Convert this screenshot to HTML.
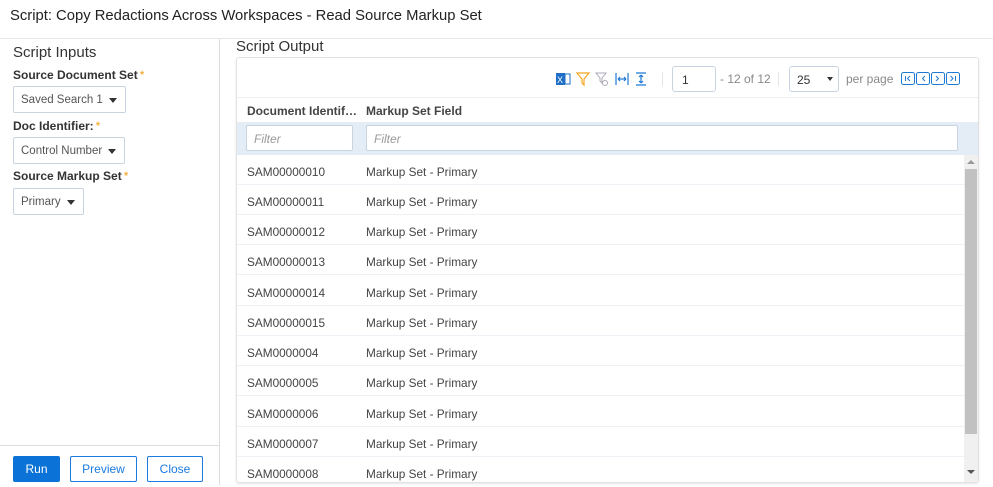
<!DOCTYPE html>
<html><head><style>
*{box-sizing:border-box;margin:0;padding:0}
body{width:993px;height:485px;overflow:hidden;background:#fff;font-family:"Liberation Sans",Arial,sans-serif;color:#333;position:relative}
.abs{position:absolute}
.title{left:10px;top:8px;font-size:14.8px;color:#222}
.hline{left:0;top:38px;width:993px;height:1px;background:#e6e6e6}
.vline{left:219px;top:39px;width:1px;height:446px;background:#ddd}
.lbl{left:13px;font-size:12px;font-weight:bold;color:#333}
.lbl span{color:#f39c12;font-weight:normal;margin-left:2px}
.sel{left:13px;height:27px;border:1px solid #c8d4e0;border-radius:2px;font-size:11.5px;color:#555;padding:7px 0 0 7px}
.caret{position:absolute;top:11px;width:0;height:0;border-left:4px solid transparent;border-right:4px solid transparent;border-top:5px solid #333}
.btn{top:456px;height:26px;border-radius:2px;font-size:12px;text-align:center;line-height:24px;border:1px solid #1b7be0;color:#1b7be0}
.panel{left:236px;top:57px;width:743px;height:426px;border:1px solid #e2e2e2;border-radius:3px;box-shadow:0 1px 2px rgba(0,0,0,.1)}
.row{left:237px;width:727px;height:30px;border-bottom:1px solid #eef1f5;font-size:11.8px;color:#444}
.row div{position:absolute;top:10px}
</style></head><body>
<div class="abs title">Script: Copy Redactions Across Workspaces - Read Source Markup Set</div>
<div class="abs hline"></div>
<div class="abs vline"></div>
<div class="abs" style="left:13px;top:44px;font-size:15px;color:#333">Script Inputs</div>
<div class="abs lbl" style="top:68px">Source Document Set<span>*</span></div>
<div class="abs sel" style="top:86px;width:113px">Saved Search 1<div class="caret" style="left:95px"></div></div>
<div class="abs lbl" style="top:119px">Doc Identifier:<span>*</span></div>
<div class="abs sel" style="top:137px;width:112px">Control Number<div class="caret" style="left:94px"></div></div>
<div class="abs lbl" style="top:169px">Source Markup Set<span>*</span></div>
<div class="abs sel" style="top:188px;width:71px">Primary<div class="caret" style="left:53px"></div></div>
<div class="abs" style="left:0;top:445px;width:219px;height:1px;background:#ddd"></div>
<div class="abs btn" style="left:13px;width:47px;background:#0b72d8;color:#fff;border-color:#0b72d8">Run</div>
<div class="abs btn" style="left:70px;width:67px">Preview</div>
<div class="abs btn" style="left:147px;width:56px">Close</div>
<div class="abs" style="left:236px;top:38px;font-size:15px;color:#333">Script Output</div>
<div class="abs panel"></div>
<svg class="abs" style="left:555px;top:71px" width="100" height="16">
<rect x="1" y="2" width="9" height="12" fill="#1f6fc8"/><text x="2" y="12" font-size="9" fill="#fff" font-family="Liberation Sans">X</text><rect x="10" y="3" width="5" height="10" fill="none" stroke="#1f6fc8"/>
<path d="M22 2h12l-5 6v6l-2-2V8z" fill="none" stroke="#f5a623" stroke-width="1.2"/>
<path d="M41 2h10l-4 5v5l-2-2V7z" fill="none" stroke="#aab" stroke-width="1"/><circle cx="50" cy="12" r="2.5" fill="none" stroke="#aab"/>
<path d="M61 2v12M73 2v12M63 8h8M63 8l2-2M63 8l2 2M71 8l-2-2M71 8l-2 2" stroke="#1f7ad6" stroke-width="1.2" fill="none"/>
<path d="M81 2h10M81 14h10M86 4v8M86 4l-2 2M86 4l2 2M86 12l-2-2M86 12l2-2" stroke="#1f7ad6" stroke-width="1.2" fill="none"/>
</svg>
<div class="abs" style="left:662px;top:72px;width:1px;height:14px;background:#e5e5e5"></div>
<div class="abs" style="left:672px;top:66px;width:44px;height:26px;border:1px solid #c8d4e0;border-radius:3px;font-size:12px;padding:6px 0 0 9px">1</div>
<div class="abs" style="left:720px;top:72px;font-size:12px;color:#888">- 12 of 12</div>
<div class="abs" style="left:778px;top:72px;width:1px;height:14px;background:#e5e5e5"></div>
<div class="abs" style="left:789px;top:66px;width:50px;height:26px;border:1px solid #c8d4e0;border-radius:3px;font-size:12px;padding:6px 0 0 7px">25<div class="caret" style="left:37px;top:10px;border-top-width:4px;border-left-width:3.5px;border-right-width:3.5px"></div></div>
<div class="abs" style="left:846px;top:72px;font-size:12px;color:#888">per page</div>
<svg class="abs" style="left:901px;top:72px" width="60" height="14">
<g fill="none" stroke="#1f7ad6" stroke-width="1"><rect x="0.5" y="0.5" width="13" height="12" rx="2"/><rect x="15.5" y="0.5" width="13" height="12" rx="2"/><rect x="30.5" y="0.5" width="13" height="12" rx="2"/><rect x="45.5" y="0.5" width="13" height="12" rx="2"/>
<path d="M4.5 4v5M9 4l-2.5 2.5L9 9M24 4l-2.5 2.5L24 9M35 4l2.5 2.5L35 9M49.5 4l2.5 2.5L49.5 9M54.5 4v5"/></g></svg>
<div class="abs" style="left:237px;top:97px;width:741px;height:1px;background:#eee"></div>
<div class="abs" style="left:247px;top:104px;font-size:12px;font-weight:bold;color:#444">Document Identif…</div>
<div class="abs" style="left:366px;top:104px;font-size:12px;font-weight:bold;color:#444">Markup Set Field</div>
<div class="abs" style="left:237px;top:122px;width:741px;height:33px;background:#e4ecf5"></div>
<div class="abs" style="left:246px;top:125px;width:107px;height:26px;background:#fff;border:1px solid #c8d4e0;border-radius:2px;font-size:12px;font-style:italic;color:#999;padding:6px 0 0 7px">Filter</div>
<div class="abs" style="left:366px;top:125px;width:592px;height:26px;background:#fff;border:1px solid #c8d4e0;border-radius:2px;font-size:12px;font-style:italic;color:#999;padding:6px 0 0 7px">Filter</div>
<div class="abs row" style="top:155px"><div style="left:10px">SAM00000010</div><div style="left:129px">Markup Set - Primary</div></div>
<div class="abs row" style="top:185px"><div style="left:10px">SAM00000011</div><div style="left:129px">Markup Set - Primary</div></div>
<div class="abs row" style="top:215px"><div style="left:10px">SAM00000012</div><div style="left:129px">Markup Set - Primary</div></div>
<div class="abs row" style="top:245px"><div style="left:10px">SAM00000013</div><div style="left:129px">Markup Set - Primary</div></div>
<div class="abs row" style="top:276px"><div style="left:10px">SAM00000014</div><div style="left:129px">Markup Set - Primary</div></div>
<div class="abs row" style="top:306px"><div style="left:10px">SAM00000015</div><div style="left:129px">Markup Set - Primary</div></div>
<div class="abs row" style="top:336px"><div style="left:10px">SAM0000004</div><div style="left:129px">Markup Set - Primary</div></div>
<div class="abs row" style="top:366px"><div style="left:10px">SAM0000005</div><div style="left:129px">Markup Set - Primary</div></div>
<div class="abs row" style="top:397px"><div style="left:10px">SAM0000006</div><div style="left:129px">Markup Set - Primary</div></div>
<div class="abs row" style="top:427px"><div style="left:10px">SAM0000007</div><div style="left:129px">Markup Set - Primary</div></div>
<div class="abs row" style="top:457px;border:none"><div style="left:10px">SAM0000008</div><div style="left:129px">Markup Set - Primary</div></div>
<div class="abs" style="left:964px;top:155px;width:14px;height:327px;background:#f0f0f0"></div>
<div class="abs" style="left:965px;top:169px;width:12px;height:265px;background:#c1c1c1"></div>
<div class="abs caret" style="left:967px;top:160px;border-top:none;border-bottom:4px solid #999"></div>
<div class="abs caret" style="left:967px;top:470px;border-top:4px solid #555"></div>
</body></html>
